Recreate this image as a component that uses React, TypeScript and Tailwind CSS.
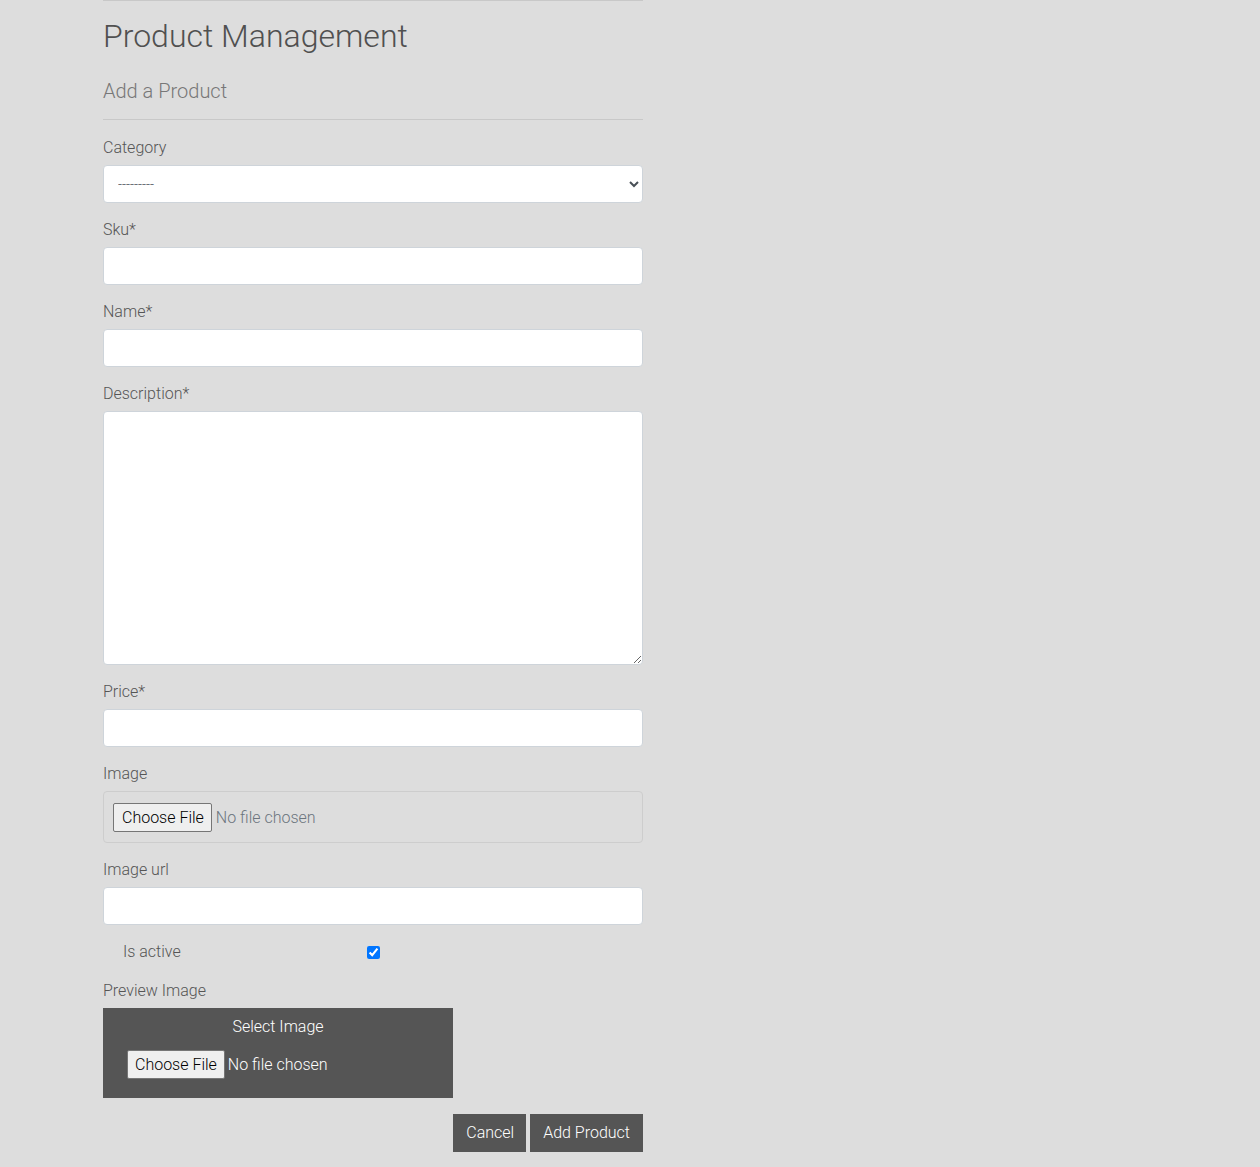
import React from "react";

const font = { fontFamily: "Roboto, 'Noto Sans', sans-serif" };

function Label({ children }: { children: React.ReactNode }) {
  return <label className="block pt-[1px] text-[16px] leading-[24px] font-light text-[#555] mb-[5px]">{children}</label>;
}

function TextInput() {
  return <input type="text" className="block w-full h-[38px] bg-white border border-[#ced4da] rounded-[4px] px-3 text-[16px] font-light text-[#495057] outline-none" />;
}

export default function App() {
  return (
    <div className="min-h-[1167px] bg-[#dddddd] pl-[103px]" style={font}>
      <div className="w-[540px] border-t border-[#c8c8c8]">
        <h1 className="mt-[16px] text-[32px] leading-[38px] font-light text-[#505050]">Product Management</h1>
        <h2 className="mt-[24px] text-[20px] leading-[24px] font-light text-[#777]">Add a Product</h2>
        <hr className="mt-[16px] border-0 border-t border-[#c8c8c8]" />

        <div className="mt-[15px]">
          <Label>Category</Label>
          <select className="block w-full h-[38px] bg-white border border-[#ced4da] rounded-[4px] pl-[10px] pr-2 text-[14px] font-light text-[#495057] outline-none">
            <option>---------</option>
          </select>
        </div>

        <div className="mt-[14px]">
          <Label>Sku*</Label>
          <TextInput />
        </div>

        <div className="mt-[14px]">
          <Label>Name*</Label>
          <TextInput />
        </div>

        <div className="mt-[14px]">
          <Label>Description*</Label>
          <textarea className="block w-full h-[254px] bg-white border border-[#ced4da] rounded-[4px] px-3 py-2 text-[16px] font-light text-[#495057] outline-none" />
        </div>

        <div className="mt-[14px]">
          <Label>Price*</Label>
          <TextInput />
        </div>

        <div className="mt-[14px]">
          <Label>Image</Label>
          <div className="h-[52px] border border-[#cdcdcd] rounded-[4px] pl-[9px] flex items-center">
            <input
              type="file"
              className="text-[16px] leading-[19px] font-light text-[#6c757d] file:mr-[4px] file:rounded-[2px] file:border file:border-[#767676] file:bg-[#efefef] file:pl-[8px] file:pr-[7px] file:py-[4px] file:font-light file:text-black file:leading-[19px]"
            />
          </div>
        </div>

        <div className="mt-[14px]">
          <Label>Image url</Label>
          <TextInput />
        </div>

        <div className="mt-[15px] h-[24px] flex items-center pl-[20px]">
          <span className="w-[244px] text-[16px] leading-[24px] font-light text-[#555]">Is active</span>
          <input type="checkbox" defaultChecked className="w-[13px] h-[13px] m-0" />
        </div>

        <div className="mt-[14px]">
          <Label>Preview Image</Label>
          <div className="w-[350px] h-[90px] bg-[#555555] pt-[7px] pl-[24px]">
            <div className="text-center pr-[24px] text-[16px] leading-[24px] font-light text-white">Select Image</div>
            <div className="mt-[11px]">
              <input
                type="file"
                className="text-[16px] leading-[19px] font-light text-white file:mr-[3px] file:rounded-[2px] file:border file:border-[#767676] file:bg-[#efefef] file:pl-[7px] file:pr-[7px] file:py-[4px] file:font-light file:text-black file:leading-[19px]"
              />
            </div>
          </div>
        </div>

        <div className="mt-[16px] flex justify-end gap-[4px]">
          <button className="h-[38px] pl-[13px] pr-[12px] bg-[#555555] text-white text-[16px] font-light">Cancel</button>
          <button className="h-[38px] px-[13px] bg-[#555555] text-white text-[16px] font-light">Add Product</button>
        </div>
      </div>
    </div>
  );
}
